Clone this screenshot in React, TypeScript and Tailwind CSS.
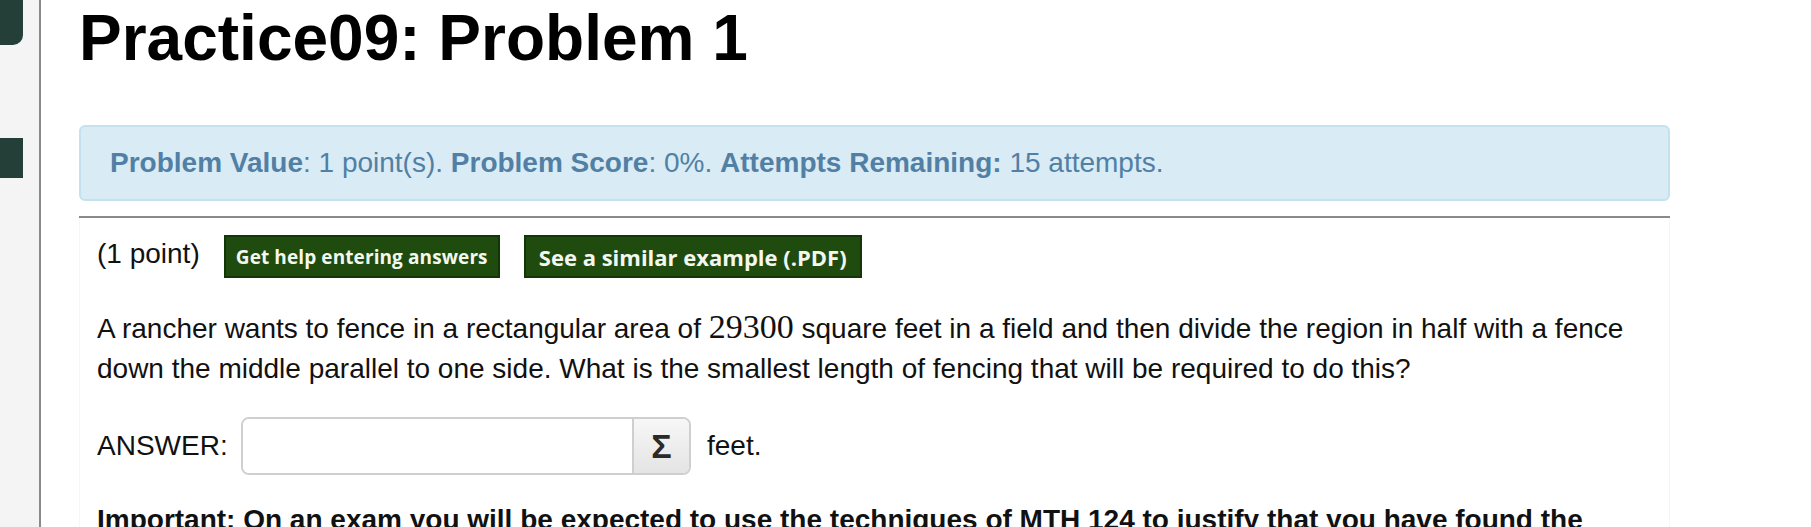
import React from "react";

// Left rail with the two dark tabs
function SideRail() {
  return (
    <div className="w-[41px] shrink-0 bg-[#f4f4f4] border-r-2 border-[#8a8a8a] min-h-[527px] relative">
      <div className="w-[23px] h-[45px] bg-[#233f37] rounded-br-[10px]" />
      <div className="w-[23px] h-[40px] bg-[#233f37] mt-[93px]" />
    </div>
  );
}

function ImageButton({ label, className }: { label: string; className: string }) {
  return (
    <span
      className={`inline-flex items-center justify-center h-[43px] bg-[#1f4c0e] border-2 border-[#133608] text-[#f4f7f0] font-bold whitespace-nowrap ${className}`}
      style={{ fontFamily: '"Open Sans", "DejaVu Sans", sans-serif' }}
    >
      {label}
    </span>
  );
}

export default function App() {
  return (
    <div
      className="flex w-[1811px] h-[527px] overflow-hidden bg-white text-[#111]"
      style={{ fontFamily: '"Liberation Sans", Arial, sans-serif' }}
    >
      <SideRail />

      <main className="flex-1 pl-[38px]">
        <div className="w-[1591px]">
          <h2 className="pt-[3px] text-[64px] leading-[70px] font-bold text-black">
            Practice09: Problem 1
          </h2>

          {/* Score summary */}
          <div className="mt-[52px] h-[76px] rounded-[6px] border-2 border-[#c4e2ee] bg-[#d9ebf5] pl-[29px] py-[16px] text-[28px] leading-[40px] text-[#5180a4]">
            <b>Problem Value</b>: 1 point(s). <b>Problem Score</b>: 0%.{" "}
            <b>Attempts Remaining:</b> 15 attempts.
          </div>

          <div className="mt-[15px] h-[2px] bg-[#8a8a8a]" />

          {/* Problem body */}
          <div className="border-x border-[#f6f6f6] pl-[17px] pt-[17px] pb-[40px] text-[28px] leading-[40px]">
            <div className="flex items-center gap-[24px]">
              <span className="-mt-[6px]">(1 point)</span>
              <div className="flex items-center gap-[24px]">
                <ImageButton label="Get help entering answers" className="w-[276px] text-[19px] tracking-[0.1px]" />
                <ImageButton label="See a similar example (.PDF)" className="w-[338px] text-[22px]" />
              </div>
            </div>

            <p className="mt-[29px]">
              A rancher wants to fence in a rectangular area of{" "}
              <span className="text-[34px]" style={{ fontFamily: '"Liberation Serif", "Times New Roman", serif' }}>
                29300
              </span>{" "}
              square feet in a field and then divide the region in half with a fence
              <br />
              down the middle parallel to one side. What is the smallest length of fencing that will be required to do this?
            </p>

            <div className="mt-[28px] flex items-center">
              <span className="w-[144px]">ANSWER:</span>
              <div className="flex h-[58px] w-[450px] rounded-[8px] border-2 border-[#cfcfcf] overflow-hidden shadow-[inset_0_1px_2px_rgba(0,0,0,0.08)]">
                <div className="flex-1 bg-white" />
                <div className="w-[57px] flex items-center justify-center border-l-2 border-[#cfcfcf] bg-gradient-to-b from-[#f7f7f7] to-[#e4e4e4] text-[34px] font-bold text-[#2a2a2a]">
                  Σ
                </div>
              </div>
              <span className="ml-[16px]">feet.</span>
            </div>

            <p className="mt-[25px] font-bold whitespace-nowrap">
              Important: On an exam you will be expected to use the techniques of MTH 124 to justify that you have found the
            </p>
          </div>
        </div>
      </main>
    </div>
  );
}
